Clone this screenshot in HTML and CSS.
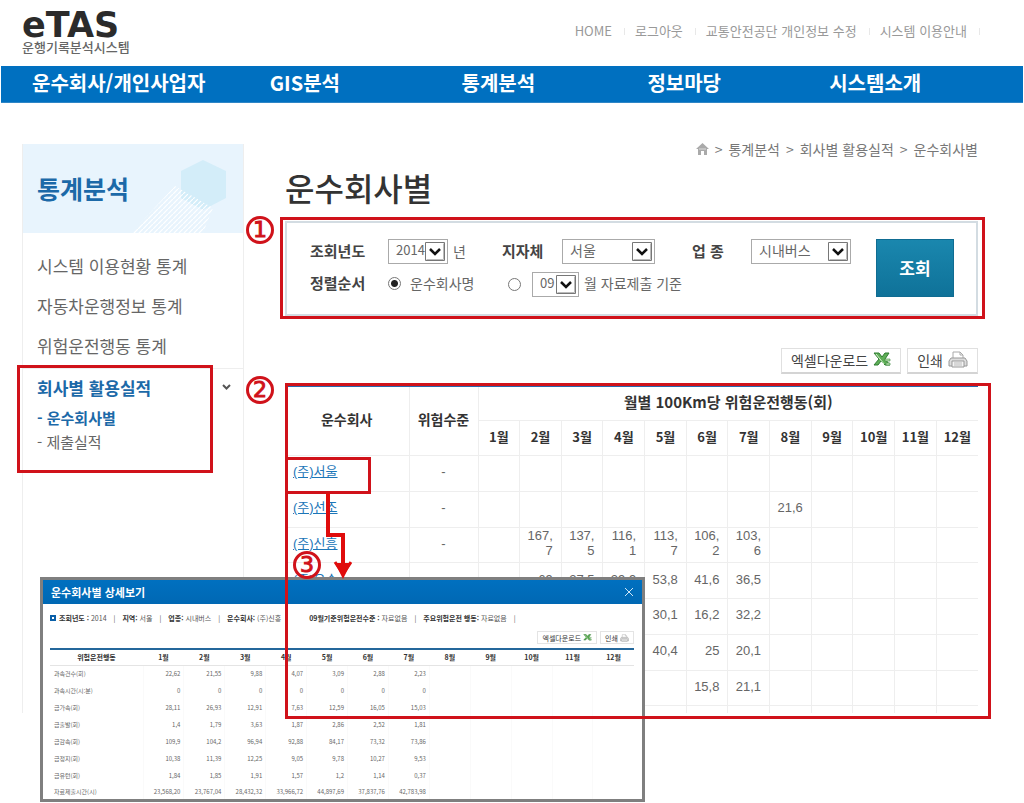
FILE: index.html
```html
<!DOCTYPE html>
<html lang="ko">
<head>
<meta charset="utf-8">
<title>eTAS 운행기록분석시스템</title>
<link rel="stylesheet" href="styles.css">
</head>
<body>
<svg class="defs" aria-hidden="true">
  <symbol id="excel" viewBox="0 0 18 15">
    <path d="M1 1h5l3 4 3-4h4l-4 6 5 6h-5l-4-4-3 4H1l5-6z" fill="#5fae57" stroke="#2f7d32"/>
    <path d="M12 7h5v2h-5zM13 11h4v2h-4z" fill="#bfe3b4" stroke="#3c8a3c" stroke-width=".6"/>
    <path d="M3 2l8 10" stroke="#d5efcd"/>
  </symbol>
  <symbol id="printer" viewBox="0 0 20 17">
    <path d="M5 8V1h7l3 3v4" fill="#fff" stroke="#aaa"/>
    <path d="M12 1v3h3" fill="none" stroke="#aaa"/>
    <path d="M3 7h14l2 3v5H1v-5z" fill="#ddd" stroke="#999"/>
    <path d="M4 10h12v6H4z" fill="#f4f4f4" stroke="#999"/>
    <path d="M6 12h8M6 14h8" stroke="#bbb"/>
  </symbol>
  <symbol id="arrow" viewBox="0 0 20 19">
    <path d="M.5.500h19v18H.5z" fill="#fff" stroke="#777"/>
    <path d="M1.500 17.500h17v-16" fill="none" stroke="#bbb"/>
    <path d="M5 7l5 5 5-5" fill="none" stroke="#111" stroke-width="2.500"/>
  </symbol>
</svg>

<header class="header">
  <a class="logo" href="#"><strong>eTAS</strong><span>운행기록분석시스템</span></a>
  <nav class="util">
    <a href="#">HOME</a><a href="#">로그아웃</a><a href="#">교통안전공단 개인정보 수정</a><a href="#">시스템 이용안내</a>
  </nav>
</header>

<nav class="gnb">
  <a href="#">운수회사/개인사업자</a><a href="#">GIS분석</a><a href="#">통계분석</a><a href="#">정보마당</a><a href="#">시스템소개</a>
</nav>

<div class="main">
  <aside class="side">
    <div class="side-head">
      <h2>통계분석</h2>
      <svg class="side-art" viewBox="0 0 120 89" aria-hidden="true">
        <defs><pattern id="lines" width="5" height="5" patternUnits="userSpaceOnUse"><path d="M-1 6L6-1" stroke="#fff" stroke-width="1.200"/></pattern></defs>
        <path d="M80 16l23 11v27L80 66 58 54V27z" fill="#d3edf9"/>
        <path d="M8 89L52 42l38 22-10 25z" fill="url(#lines)"/>
      </svg>
    </div>
    <ul class="menu">
      <li><a href="#">시스템 이용현황 통계</a></li>
      <li><a href="#">자동차운행정보 통계</a></li>
      <li><a href="#">위험운전행동 통계</a></li>
      <li class="open">
        <a href="#">회사별 활용실적 <svg width="9" height="7" viewBox="0 0 9 7" aria-hidden="true"><path d="M1 1l3.500 3.500L8 1" fill="none" stroke="#555" stroke-width="2"/></svg></a>
        <ul class="submenu">
          <li><a class="on" href="#">- 운수회사별</a></li>
          <li><a href="#">- 제출실적</a></li>
        </ul>
        <span class="mark mark-menu"></span>
      </li>
    </ul>
  </aside>

  <main class="content">
    <nav class="crumbs">
      <svg width="13" height="14" viewBox="0 0 13 14" aria-label="홈"><path d="M6.500 1L0 7h2v6h3V9h3v4h3V7h2z" fill="#aaa"/><path d="M3 7h7" stroke="#ddd"/></svg>
      <span>&gt;</span><a href="#">통계분석</a><span>&gt;</span><a href="#">회사별 활용실적</a><span>&gt;</span><a href="#">운수회사별</a>
    </nav>
    <h1>운수회사별</h1>

    <form class="search">
      <div class="fields">
        <label class="name" for="year">조회년도</label>
        <div class="field"><span class="pick w-year"><select id="year"><option>2014</option></select><svg><use href="#arrow"/></svg></span><span>년</span></div>
        <label class="name" for="area">지자체</label>
        <div class="field"><span class="pick w-area"><select id="area"><option>서울</option></select><svg><use href="#arrow"/></svg></span></div>
        <label class="name" for="kind">업 종</label>
        <div class="field"><span class="pick w-kind"><select id="kind"><option>시내버스</option></select><svg><use href="#arrow"/></svg></span></div>
        <span class="name">정렬순서</span>
        <div class="field sort">
          <label class="by-name"><input type="radio" name="sort" checked>운수회사명</label>
          <input type="radio" name="sort" id="by-month" aria-label="월 자료제출 기준">
          <span class="pick w-month"><select aria-label="월"><option>09</option></select><svg><use href="#arrow"/></svg></span>
          <label for="by-month">월 자료제출 기준</label>
        </div>
      </div>
      <button class="submit" type="button">조회</button>
      <span class="mark mark-search"></span>
      <span class="num num-search">1</span>
    </form>

    <div class="tools">
      <button type="button">엑셀다운로드<svg width="18" height="15"><use href="#excel"/></svg></button>
      <button type="button">인쇄<svg width="20" height="17"><use href="#printer"/></svg></button>
    </div>

    <div class="result">
      <table class="grid">
        <colgroup><col class="c-firm"><col class="c-level"><col span="12"></colgroup>
        <thead>
          <tr><th rowspan="2">운수회사</th><th rowspan="2">위험수준</th><th class="wide" colspan="12">월별 100Km당 위험운전행동(회)</th></tr>
          <tr class="months"><th>1월</th><th>2월</th><th>3월</th><th>4월</th><th>5월</th><th>6월</th><th>7월</th><th>8월</th><th>9월</th><th>10월</th><th>11월</th><th>12월</th></tr>
        </thead>
        <tbody>
          <tr><td><a href="#">(주)서울</a></td><td>-</td><td></td><td></td><td></td><td></td><td></td><td></td><td></td><td></td><td></td><td></td><td></td><td></td></tr>
          <tr><td><a href="#">(주)선조</a></td><td>-</td><td></td><td></td><td></td><td></td><td></td><td></td><td></td><td>21,6</td><td></td><td></td><td></td><td></td></tr>
          <tr><td><a href="#">(주)신흥</a></td><td>-</td><td></td><td>167,<br>7</td><td>137,<br>5</td><td>116,<br>1</td><td>113,<br>7</td><td>106,<br>2</td><td>103,<br>6</td><td></td><td></td><td></td><td></td><td></td></tr>
          <tr><td><a href="#">(주)운수</a></td><td></td><td></td><td>69</td><td>27,5</td><td>29,9</td><td>53,8</td><td>41,6</td><td>36,5</td><td></td><td></td><td></td><td></td><td></td></tr>
          <tr><td></td><td></td><td></td><td></td><td></td><td></td><td>30,1</td><td>16,2</td><td>32,2</td><td></td><td></td><td></td><td></td><td></td></tr>
          <tr><td></td><td></td><td></td><td></td><td></td><td></td><td>40,4</td><td>25</td><td>20,1</td><td></td><td></td><td></td><td></td><td></td></tr>
          <tr><td></td><td></td><td></td><td></td><td></td><td></td><td></td><td>15,8</td><td>21,1</td><td></td><td></td><td></td><td></td><td></td></tr>
          <tr class="cut"><td></td><td></td><td></td><td></td><td></td><td></td><td></td><td></td><td></td><td></td><td></td><td></td><td></td><td></td></tr>
        </tbody>
      </table>
      <span class="mark mark-result"></span>
      <span class="mark mark-firm"></span>
      <svg class="pointer" viewBox="0 0 30 86" aria-hidden="true"><path d="M6 0v42h15v38" fill="none" stroke="#e00c0c" stroke-width="4"/><path d="M13 69l8 12 8-12" fill="none" stroke="#e00c0c" stroke-width="3"/><path d="M13 70h16l-8 16z" fill="#e00c0c"/></svg>
      <span class="num num-result">2</span>
      <span class="num num-detail">3</span>
    </div>
  </main>
</div>

<section class="popup">
  <div class="popup-bar"><h3>운수회사별 상세보기</h3><button type="button" aria-label="닫기"><svg width="10" height="10" viewBox="0 0 10 10"><path d="M1 1l8 8M9 1L1 9" stroke="#cfe6f7"/></svg></button></div>
  <div class="popup-body">
    <p class="info">
      <i class="bullet"></i><span><b>조회년도 :</b> 2014</span><em>|</em><span><b>지역:</b> 서울</span><em>|</em><span><b>업종:</b> 시내버스</span><em>|</em><span class="firm"><b>운수회사:</b> (주)신흥</span><span><b>09월기준위험운전수준 :</b> 자료없음</span><em>|</em><span><b>주요위험운전 행동:</b> 자료없음</span><em>|</em>
    </p>
    <div class="mini-tools">
      <button type="button">엑셀다운로드<svg width="9" height="7"><use href="#excel"/></svg></button>
      <button type="button">인쇄<svg width="9" height="8"><use href="#printer"/></svg></button>
    </div>
    <table class="detail">
      <colgroup><col class="c-act"><col span="12"></colgroup>
      <thead><tr><th>위험운전행동</th><th>1월</th><th>2월</th><th>3월</th><th>4월</th><th>5월</th><th>6월</th><th>7월</th><th>8월</th><th>9월</th><th>10월</th><th>11월</th><th>12월</th></tr></thead>
      <tbody>
        <tr><td>과속건수(회)</td><td>22,62</td><td>21,55</td><td>9,88</td><td>4,07</td><td>3,09</td><td>2,88</td><td>2,23</td><td></td><td></td><td></td><td></td><td></td></tr>
        <tr><td>과속시간(시:분)</td><td>0</td><td>0</td><td>0</td><td>0</td><td>0</td><td>0</td><td>0</td><td></td><td></td><td></td><td></td><td></td></tr>
        <tr><td>급가속(회)</td><td>28,11</td><td>26,93</td><td>12,91</td><td>7,63</td><td>12,59</td><td>16,05</td><td>15,03</td><td></td><td></td><td></td><td></td><td></td></tr>
        <tr><td>급출발(회)</td><td>1,4</td><td>1,79</td><td>3,63</td><td>1,87</td><td>2,86</td><td>2,52</td><td>1,81</td><td></td><td></td><td></td><td></td><td></td></tr>
        <tr><td>급감속(회)</td><td>109,9</td><td>104,2</td><td>96,94</td><td>92,88</td><td>84,17</td><td>73,32</td><td>73,86</td><td></td><td></td><td></td><td></td><td></td></tr>
        <tr><td>급정지(회)</td><td>10,38</td><td>11,39</td><td>12,25</td><td>9,05</td><td>9,78</td><td>10,27</td><td>9,53</td><td></td><td></td><td></td><td></td><td></td></tr>
        <tr><td>급유턴(회)</td><td>1,84</td><td>1,85</td><td>1,91</td><td>1,57</td><td>1,2</td><td>1,14</td><td>0,37</td><td></td><td></td><td></td><td></td><td></td></tr>
        <tr><td>자료제출시간(시)</td><td>23,568,20</td><td>23,767,04</td><td>28,432,32</td><td>33,966,72</td><td>44,897,69</td><td>37,837,76</td><td>42,783,98</td><td></td><td></td><td></td><td></td><td></td></tr>
      </tbody>
    </table>
  </div>
</section>
</body>
</html>
```
FILE: styles.css
```css
* { box-sizing: border-box; }
body {
  position: relative;
  margin: 0;
  min-height: 100vh;
  background: #fff;
  color: #666;
  font: 14px/20px "Noto Sans CJK KR", sans-serif;
}
a { color: inherit; text-decoration: none; }
ul { margin: 0; padding: 0; list-style: none; }
h1, h2, h3, p { margin: 0; }
button, select, input { font: inherit; color: inherit; margin: 0; }
svg { flex: none; }
.defs { position: absolute; width: 0; height: 0; }

.header { display: flex; justify-content: space-between; height: 66px; padding: 9px 46px 0 22px; }
.logo { display: flex; flex-direction: column; color: #666; font-size: 13px; line-height: 12px; font-weight: 500; }
.logo strong { color: #2b2b2b; font: bold 35px/32px "DejaVu Sans", sans-serif; }
.util { display: flex; gap: 23px; margin-top: 12px; padding-right: 11px; height: 20px; color: #999; font-size: 13px; }
.util a { position: relative; }
.util a::after { content: ""; position: absolute; right: -13px; top: 7px; width: 1px; height: 7px; background: #e8e8e8; }

.gnb {
  display: grid;
  grid-template-columns: 238fr 192fr 186fr 182fr 194fr;
  margin: 0 1px;
  padding-left: 31px;
  height: 37px;
  border-bottom: 1px solid #2f86c6;
  background: #0070c0;
  color: #fff;
  font-size: 20px;
  line-height: 34px;
  font-weight: 700;
}

.main { display: flex; gap: 41px; padding: 36px 46px 88px 22px; }
.side { flex: none; width: 222px; margin-top: 5px; border: solid #eee; border-width: 0 1px; }
.side-head { position: relative; height: 89px; padding: 24px 14px; background: #e8f4fd; }
.side-head h2 { color: #1c69a8; font-size: 25px; line-height: 40px; font-weight: 700; }
.side-art { position: absolute; right: 0; top: 0; width: 120px; height: 89px; }
.menu { padding-top: 13px; font-size: 17px; }
.menu > li > a { display: flex; align-items: center; justify-content: space-between; height: 40px; padding: 0 12px 0 14px; }
.menu .open { position: relative; margin-top: 2px; border-top: 1px solid #eee; }
.menu .open > a { height: 37px; color: #1c69a8; font-weight: 700; }
.submenu { padding-left: 14px; font-size: 15px; line-height: 24px; }
.submenu .on { color: #1c69a8; font-weight: 700; }

.content { flex: 1; min-width: 0; }
.crumbs { display: flex; align-items: center; justify-content: flex-end; gap: 6px; height: 20px; color: #777; }
h1 { margin-top: 4px; color: #333; font-size: 32px; line-height: 48px; font-weight: 500; }

.search {
  position: relative;
  display: flex;
  gap: 25px;
  margin-top: 10px;
  padding: 16px 22px 17px 23px;
  border: 2px solid #d3dce2;
  font-size: 14px;
}
.fields { display: grid; grid-template-columns: 78px 114px 60px 130px 59px 100px; row-gap: 7px; align-items: center; }
.name { padding-bottom: 2px; color: #444; font-size: 15px; font-weight: 700; }
.field { display: flex; align-items: center; gap: 5px; }
.field > span:not(.pick), .field > label { padding-bottom: 2px; }
.sort { grid-column: span 5; }
.by-name { display: flex; align-items: center; gap: 9px; width: 115px; }
.sort input { appearance: none; width: 13px; height: 13px; border: 1px solid #777; border-radius: 50%; background: #fff; }
.sort input:checked { background: radial-gradient(#222 0 3px, #fff 4px); }
.sort .w-month { margin-left: 6px; }
.pick { position: relative; height: 25px; }
.pick select { appearance: none; width: 100%; height: 25px; padding: 0 0 3px 7px; border: 1px solid #aaa; border-radius: 0; background: #fff; line-height: 20px; }
.pick svg { position: absolute; right: 3px; top: 3px; width: 20px; height: 19px; pointer-events: none; }
.w-year { width: 60px; }
.w-area { width: 93px; }
.w-kind { width: 100px; }
.w-month { width: 47px; }
.w-year select, .w-month select { font-size: 13px; }
.submit { width: 78px; height: 58px; padding: 0; border: 1px solid #0f6c92; border-radius: 0; background: linear-gradient(#1a87ae, #0f7299); color: #fff; font-size: 17px; font-weight: 700; }

.tools { display: flex; justify-content: flex-end; gap: 6px; margin-top: 32px; }
.tools button { display: flex; align-items: center; gap: 5px; height: 26px; padding: 0 9px 2px; border: 1px solid #e0e0e0; border-bottom: 2px solid #d4d4d4; background: #fff; color: #444; }

.result { position: relative; margin-top: 10px; }
.grid { width: 100%; height: 329px; border-collapse: collapse; border-top: 3px solid #2868ae; table-layout: fixed; font-size: 13px; line-height: 15px; }
.grid .c-firm { width: 124px; }
.grid .c-level { width: 69px; }
.grid th, .grid td { height: 35px; padding: 0 8px 3px 0; border-bottom: 1px solid #eee; border-left: 1px solid #eee; text-align: right; }
.grid tr > :first-child:not(.months th) { border-left: 0; }
.grid th { padding: 0 0 4px; color: #333; font-size: 14px; text-align: center; }
.grid .wide { font-size: 15px; }
.grid .months th { font-size: 13px; }
.grid td { font-family: "Liberation Sans", "Noto Sans CJK KR", sans-serif; }
.grid td:nth-child(1) { padding-left: 8px; text-align: left; }
.grid td:nth-child(2) { padding: 0 0 3px; text-align: center; }
.grid td a { color: #1c76b8; text-decoration: underline; }
.grid .cut td { height: 7px; padding: 0; border-bottom: 0; }

.mark { position: absolute; z-index: 3; border: 3px solid #d0121a; pointer-events: none; }
.mark-menu { left: -6px; top: -4px; width: 196px; height: 108px; }
.mark-search { inset: -6px -9px -5px -7px; }
.mark-result { inset: -1px -13px -6px 0; }
.mark-firm { left: 0; top: 73px; width: 86px; height: 37px; }
.pointer { position: absolute; z-index: 3; left: 37px; top: 109px; width: 30px; height: 86px; }
.num { position: absolute; z-index: 3; width: 28px; height: 28px; border: 3px solid #d0121a; border-radius: 50%; color: #d0121a; font: 22px/22px "DejaVu Sans", sans-serif; text-align: center; -webkit-text-stroke: 1px #d0121a; }
.num-search { left: -41px; top: -7px; }
.num-result { left: -39px; top: -8px; }
.num-detail { left: 8px; top: 167px; }

.popup { position: absolute; z-index: 2; left: 40px; top: 577px; width: 605px; border: 3px solid #7f7f7f; background: #fff; }
.popup-bar { display: flex; align-items: center; justify-content: space-between; height: 24px; padding: 0 8px; background: linear-gradient(#0070c0, #0068b4); color: #fff; }
.popup-bar h3 { font-size: 11px; line-height: 16px; }
.popup-bar button { display: flex; padding: 0; border: 0; background: none; }
.popup-body { padding: 8px 8px 0 7px; }
.info { display: flex; align-items: center; gap: 6px; height: 12px; color: #555; font-size: 7px; line-height: 12px; white-space: pre; }
.info b { color: #333; }
.info em { margin: 0 1px; font-style: normal; }
.info .firm { margin-right: 22px; }
.bullet { width: 6px; height: 6px; margin-right: -3px; border: 2px solid #0a5fa8; background: #fff; }
.mini-tools { display: flex; justify-content: flex-end; gap: 3px; margin: 7px 0 4px; }
.mini-tools button { display: flex; align-items: center; gap: 2px; height: 13px; padding: 0 4px; border: 1px solid #e4e4e4; background: #fff; font-size: 7px; line-height: 10px; color: #333; }
.detail { width: 100%; border-collapse: collapse; border-top: 2px solid #24679b; table-layout: fixed; font-size: 6px; line-height: 10px; }
.detail .c-act { width: 93px; }
.detail th { height: 16px; padding: 0; border-bottom: 1px solid #e4e4e4; color: #333; font-size: 7px; }
.detail td { height: 17px; padding: 0 3px 0 0; border-left: 1px solid #fafafa; text-align: right; }
.detail tr:last-child td { height: 15px; }
.detail td:first-child { padding-left: 4px; border-left: 0; text-align: left; }
```
